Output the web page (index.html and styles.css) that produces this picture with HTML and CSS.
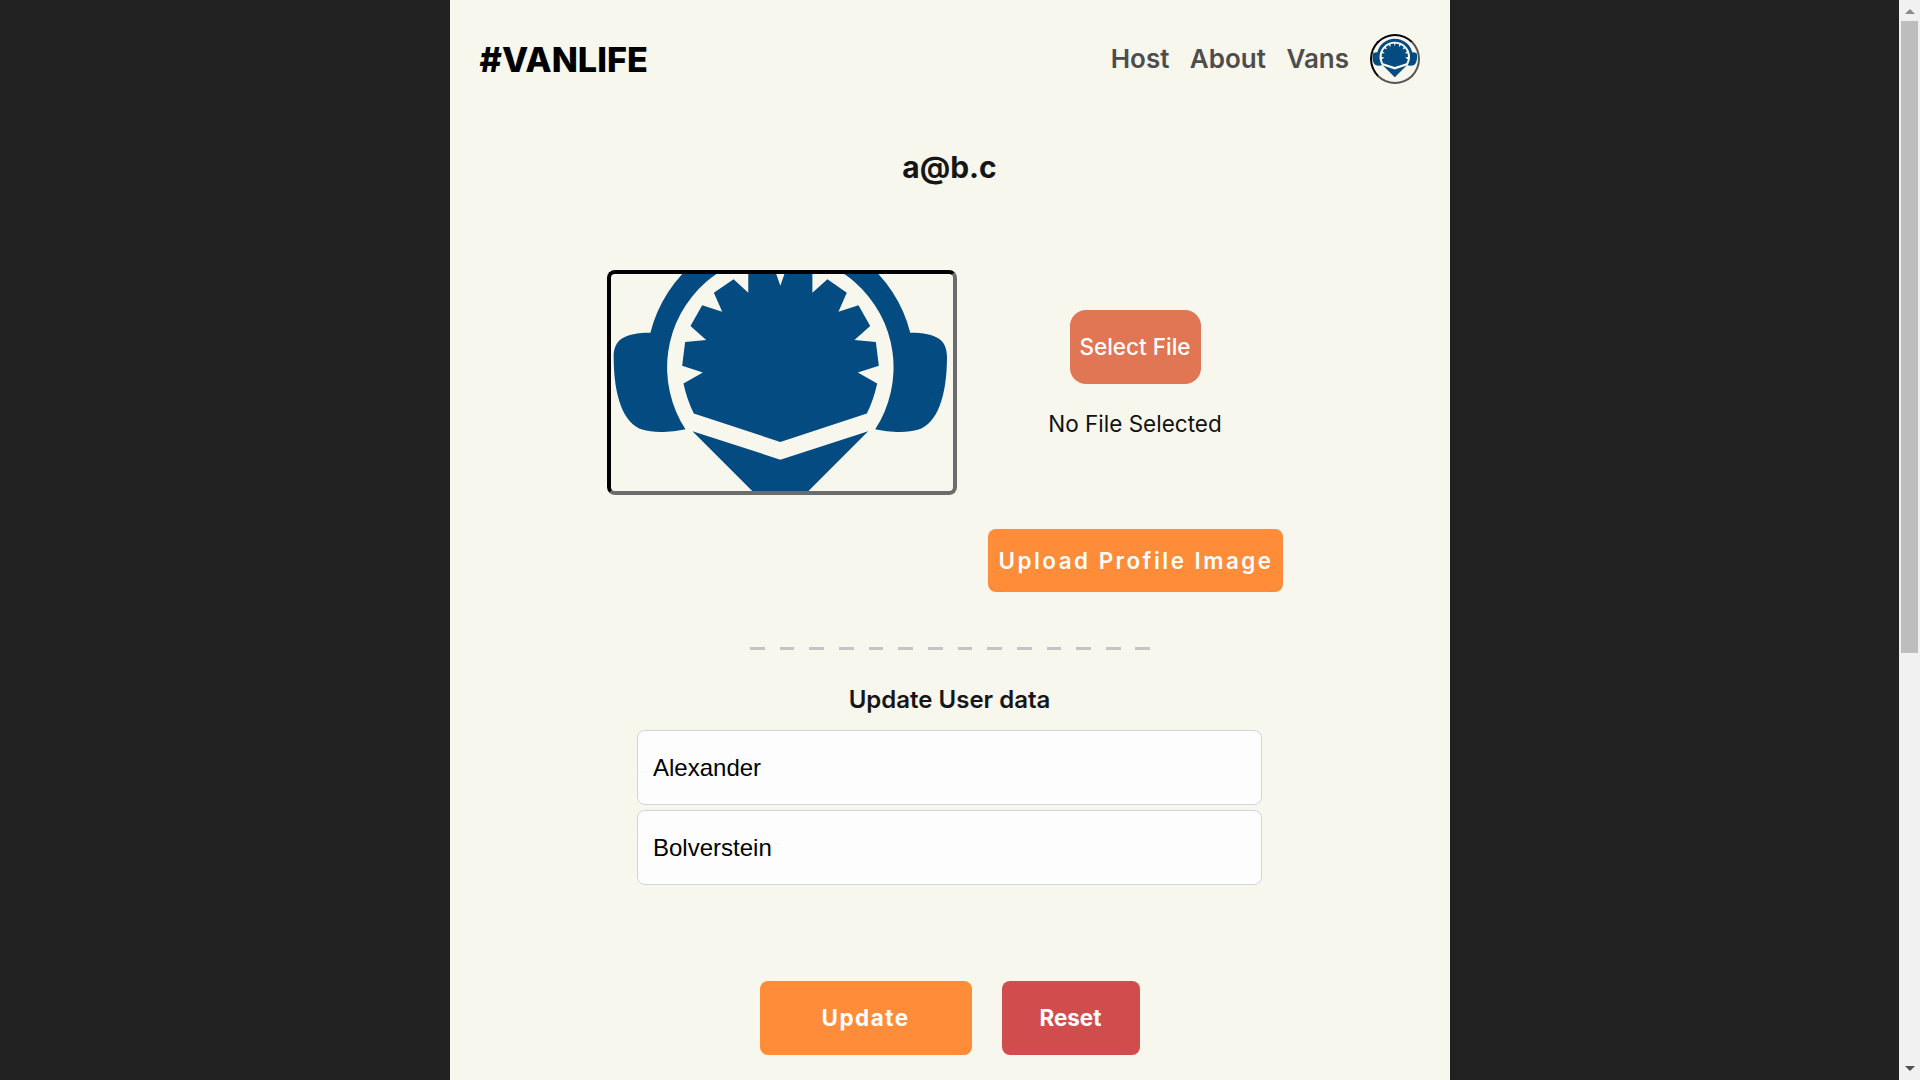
FILE: index.html
```html
<!DOCTYPE html>
<html>
<head>
<meta name="viewport" content="width=device-width, initial-scale=1">
<title>#VANLIFE</title>
<link rel="stylesheet" href="styles.css">
</head>
<body>

<!-- logo is used twice, navbar avatar and profile image -->
<svg class="defs" width="0" height="0">
  <symbol id="logo" viewBox="64 -115 1024 1024" preserveAspectRatio="xMidYMid slice">
    <path fill="#034b80" d="M182 248A401 401 0 0 1 960 248C1040 248 1070 270 1070 320C1070 440 1040 520 985 538C950 550 890 545 855 537A339 339 0 1 0 287 537C252 545 192 550 157 538C102 520 72 440 72 320C72 270 102 248 182 248Z"/>
    <path fill="#034b80" d="M571 107L590 53L667 66L667 128L712 88L770 128L745 185L805 166L840 228L793 270L857 276L866 347L803 367L861 400Q850 450 830 490L571 575L312 490Q292 450 281 400L339 367L277 347L286 276L349 270L302 228L337 166L397 185L372 128L431 88L475 128L475 66L552 53Z"/>
    <path fill="#034b80" d="M308 543L571 628L834 543L571 806Z"/>
  </symbol>
</svg>

<div class="viewport">
  <div class="page">

    <header class="navbar">
      <a class="brand" href="#">#VANLIFE</a>
      <nav class="links">
        <a href="#">Host</a>
        <a href="#">About</a>
        <a href="#">Vans</a>
        <span class="avatar"><svg><use href="#logo"/></svg></span>
      </nav>
    </header>

    <h1 class="email">a@b.c</h1>

    <section class="photo-row">
      <div class="photo"><svg><use href="#logo"/></svg></div>
      <div class="photo-actions">
        <button type="button" class="select-btn">Select File</button>
        <p class="file-name">No File Selected</p>
        <button type="button" class="upload-btn">Upload Profile Image</button>
      </div>
    </section>

    <div class="dashes"></div>

    <form class="user-form" onsubmit="return false;">
      <h2>Update User data</h2>
      <input type="text" name="firstname" value="Alexander">
      <input type="text" name="lastname" value="Bolverstein">
      <div class="form-btns">
        <button type="submit" class="update-btn">Update</button>
        <button type="reset" class="reset-btn">Reset</button>
      </div>
    </form>

  </div>
</div>

<!-- browser scrollbar from the screenshot -->
<div class="scrollbar">
  <span class="arrow-up"></span>
  <span class="thumb"></span>
  <span class="arrow-down"></span>
</div>

</body>
</html>
```

FILE: styles.css
```css
html, body {
  height: 100%;
}

body {
  margin: 0;
  display: flex;
  overflow: hidden;
  background-color: #222222;
  font-family: Inter, "Liberation Sans", Arial, sans-serif;
  color: #161616;
}

.defs {
  display: block;
  flex: none;
}

.viewport {
  flex: 1;
  min-width: 0;
  overflow: hidden;
}

.page {
  width: 1000px;
  height: 100%;
  margin: 0 auto;
  background-color: #f8f7ee;
}

/* navbar */
.navbar {
  display: flex;
  justify-content: space-between;
  align-items: center;
  padding: 34px 30px 0;
}

.brand {
  font-size: 34.2px;
  font-weight: 800;
  color: #000;
  text-decoration: none;
}

.links {
  display: flex;
  align-items: center;
  gap: 20.5px;
}

.links a {
  margin-bottom: 1px;
  font-size: 26px;
  font-weight: 600;
  color: #4d4d4d;
  text-decoration: none;
}

.avatar {
  width: 50px;
  height: 50px;
  box-sizing: border-box;
  border: 2px solid;
  border-color: #000 #555 #555 #000;
  border-radius: 50%;
  overflow: hidden;
}

.avatar svg {
  display: block;
  width: 100%;
  height: 100%;
}

.email {
  margin: 65px 0 0;
  font-size: 30px;
  line-height: 36px;
  font-weight: 700;
  text-align: center;
}

/* profile image */
.photo-row {
  display: flex;
  gap: 31px;
  margin-top: 85px;
  padding-left: 157px;
}

.photo {
  width: 350px;
  height: 225px;
  box-sizing: border-box;
  border: 4px solid;
  border-color: #000 #6c6c6c #6c6c6c #000;
  border-radius: 8px;
  overflow: hidden;
}

.photo svg {
  display: block;
  width: 100%;
  height: 100%;
}

.photo-actions {
  display: flex;
  flex-direction: column;
  align-items: center;
  width: 295px;
  padding-top: 40px;
}

button {
  border: none;
  color: #fff;
  font-family: inherit;
  cursor: pointer;
}

.select-btn {
  width: 131px;
  height: 74px;
  padding: 0 0 2px;
  border-radius: 16px;
  background-color: #e17654;
  font-size: 22.5px;
  font-weight: 500;
}

.file-name {
  margin: 25px 0 0;
  font-size: 22.5px;
  line-height: 30px;
  color: #111;
}

.upload-btn {
  width: 295px;
  height: 63px;
  margin-top: 90px;
  padding: 0 0 0 2px;
  border-radius: 8px;
  background-color: #ff8c38;
  font-size: 22.4px;
  font-weight: 600;
  letter-spacing: 2.5px;
}

.dashes {
  width: 400px;
  height: 3px;
  margin: 55px auto 0;
  background: repeating-linear-gradient(to right, #c4c4c4 0, #c4c4c4 14.8px, transparent 14.8px, transparent 29.65px);
}

/* user form */
.user-form {
  display: flex;
  flex-direction: column;
  align-items: center;
}

.user-form h2 {
  margin: 35px 0 0;
  font-size: 24px;
  line-height: 30px;
  font-weight: 600;
}

.user-form input {
  width: 625px;
  height: 75px;
  box-sizing: border-box;
  margin-top: 5px;
  padding: 0 15px;
  border: 1px solid #d2d3dd;
  border-radius: 8px;
  background-color: #fdfdfd;
  font-family: "Liberation Sans", Arial, sans-serif;
  font-size: 24px;
  color: #000;
}

.user-form h2 + input {
  margin-top: 15px;
}

.form-btns {
  display: flex;
  gap: 30px;
  margin-top: 96px;
}

.form-btns button {
  height: 74px;
  padding: 0 0 2px;
  border-radius: 8px;
  font-size: 22.4px;
  font-weight: 700;
}

.update-btn {
  width: 212px;
  background-color: #ff8c38;
  letter-spacing: 1.5px;
}

.reset-btn {
  width: 138px;
  background-color: #d14d4d;
}

/* scrollbar column */
.scrollbar {
  flex: none;
  display: flex;
  flex-direction: column;
  align-items: center;
  width: 21px;
  height: 100%;
  background-color: #f1f1f1;
}

.thumb {
  width: 17px;
  height: 632px;
  margin-top: 7px;
  background-color: #bdbdbd;
}

.arrow-up, .arrow-down {
  width: 0;
  height: 0;
  border-left: 5px solid transparent;
  border-right: 5px solid transparent;
}

.arrow-up {
  margin-top: 9px;
  border-bottom: 5px solid #8a8a8a;
}

.arrow-down {
  margin-top: auto;
  margin-bottom: 9px;
  border-top: 5px solid #505050;
}
```
